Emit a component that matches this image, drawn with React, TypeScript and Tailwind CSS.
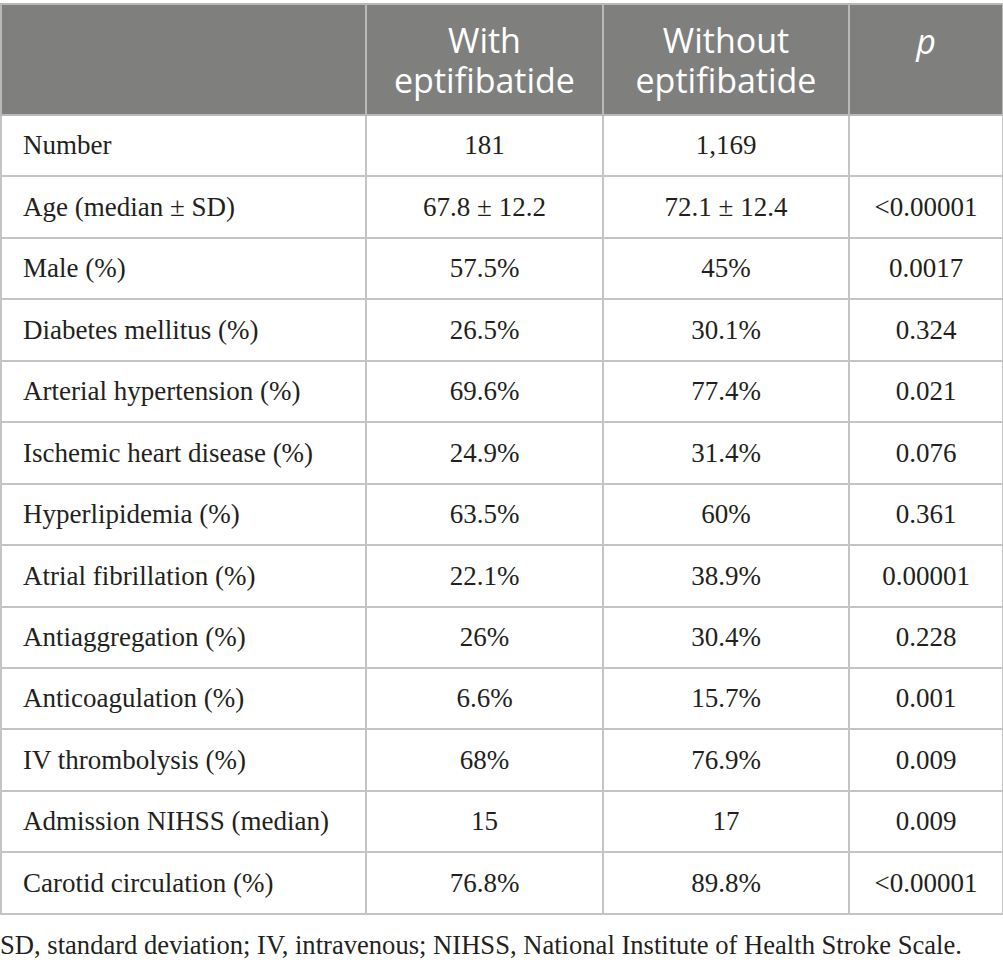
import React from "react";

const rows: [string, string, string, string][] = [
  ["Number", "181", "1,169", ""],
  ["Age (median ± SD)", "67.8 ± 12.2", "72.1 ± 12.4", "<0.00001"],
  ["Male (%)", "57.5%", "45%", "0.0017"],
  ["Diabetes mellitus (%)", "26.5%", "30.1%", "0.324"],
  ["Arterial hypertension (%)", "69.6%", "77.4%", "0.021"],
  ["Ischemic heart disease (%)", "24.9%", "31.4%", "0.076"],
  ["Hyperlipidemia (%)", "63.5%", "60%", "0.361"],
  ["Atrial fibrillation (%)", "22.1%", "38.9%", "0.00001"],
  ["Antiaggregation (%)", "26%", "30.4%", "0.228"],
  ["Anticoagulation (%)", "6.6%", "15.7%", "0.001"],
  ["IV thrombolysis (%)", "68%", "76.9%", "0.009"],
  ["Admission NIHSS (median)", "15", "17", "0.009"],
  ["Carotid circulation (%)", "76.8%", "89.8%", "<0.00001"],
];

export default function App() {
  return (
    <div className="w-[1003px] bg-white pt-[3px]">
      <table className="w-[1002px] border-collapse table-fixed">
        <colgroup>
          <col className="w-[365px]" />
          <col className="w-[237px]" />
          <col className="w-[246px]" />
          <col className="w-[154px]" />
        </colgroup>
        <thead>
          <tr className="h-[111px] bg-[#7f807e] text-white font-['Open_Sans',sans-serif] text-[34px] leading-[40px]">
            <th className="border-2 border-[#b9b9b9] font-normal"></th>
            <th className="border-2 border-[#b9b9b9] font-normal text-center">
              <div>With</div>
              <div>eptifibatide</div>
            </th>
            <th className="border-2 border-[#b9b9b9] font-normal text-center">
              <div>Without</div>
              <div>eptifibatide</div>
            </th>
            <th className="border-2 border-[#b9b9b9] font-normal text-center italic align-top pt-[16px]">p</th>
          </tr>
        </thead>
        <tbody className="font-['Liberation_Serif',serif] text-[27px] text-[#231f20]">
          {rows.map((r, i) => (
            <tr key={i} className="h-[61.45px]">
              <td className="border-2 border-[#c4c4c4] pl-[21px] whitespace-nowrap">{r[0]}</td>
              <td className="border-2 border-[#c4c4c4] text-center">{r[1]}</td>
              <td className="border-2 border-[#c4c4c4] text-center">{r[2]}</td>
              <td className="border-2 border-[#c4c4c4] text-center">{r[3]}</td>
            </tr>
          ))}
        </tbody>
      </table>
      <p className="font-['Liberation_Serif',serif] text-[26.6px] text-[#231f20] mt-[11px] whitespace-nowrap">
        SD, standard deviation; IV, intravenous; NIHSS, National Institute of Health Stroke Scale.
      </p>
    </div>
  );
}
